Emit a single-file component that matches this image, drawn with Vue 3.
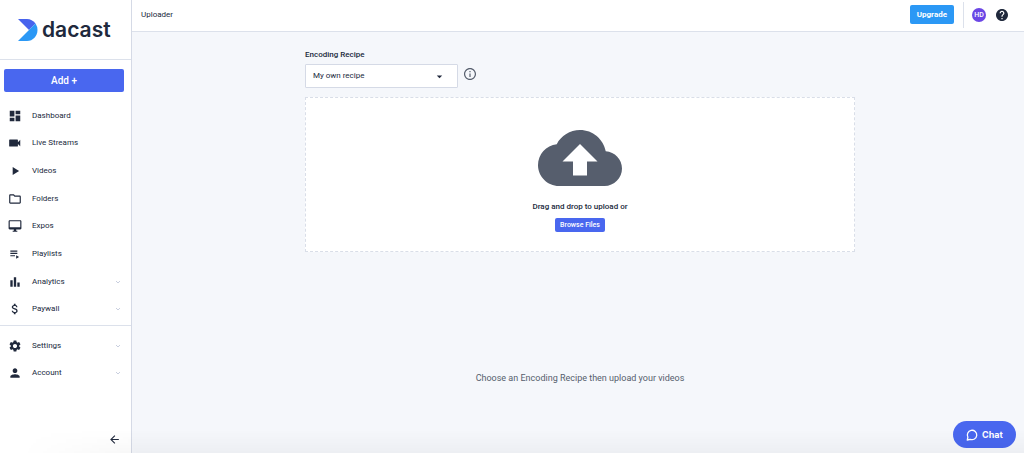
<script setup>
import { ref } from 'vue'

const mainLinks = [
  { label: 'Dashboard', icon: 'M3 13h8V3H3v10zm0 8h8v-6H3v6zm10 0h8V11h-8v10zm0-18v6h8V3h-8z' },
  { label: 'Live Streams', icon: 'M17 10.5V7c0-.55-.45-1-1-1H3c-.55 0-1 .45-1 1v10c0 .55.45 1 1 1h13c.55 0 1-.45 1-1v-3.5l4 4v-11l-4 4z' },
  { label: 'Videos', icon: 'M8 5v14l11-7z' },
  { label: 'Folders', icon: 'M9.17 6l2 2H20v10H4V6h5.17M10 4H4c-1.1 0-1.99.9-1.99 2L2 18c0 1.1.9 2 2 2h16c1.1 0 2-.9 2-2V8c0-1.1-.9-2-2-2h-8l-2-2z' },
  { label: 'Expos', icon: 'M21 2H3c-1.1 0-2 .9-2 2v12c0 1.1.9 2 2 2h7v2H8v2h8v-2h-2v-2h7c1.1 0 2-.9 2-2V4c0-1.1-.9-2-2-2zm0 12H3V4h18v10z' },
  { label: 'Playlists', icon: 'M4 10h12v2H4zM4 6h12v2H4zM4 14h8v2H4zM14 14v6l5-3z' },
  { label: 'Analytics', icon: 'M4 9h4v11H4zM16 13h4v7h-4zM10 4h4v16h-4z', expands: true },
  { label: 'Paywall', icon: 'M11.8 10.9c-2.27-.59-3-1.2-3-2.15 0-1.09 1.01-1.85 2.7-1.85 1.78 0 2.44.85 2.5 2.1h2.21c-.07-1.72-1.12-3.3-3.21-3.81V3h-3v2.16c-1.94.42-3.5 1.68-3.5 3.61 0 2.31 1.91 3.46 4.7 4.13 2.5.6 3 1.48 3 2.41 0 .69-.49 1.79-2.7 1.79-2.06 0-2.87-.92-2.98-2.1h-2.2c.12 2.19 1.76 3.42 3.68 3.83V21h3v-2.15c1.95-.37 3.5-1.5 3.5-3.55 0-2.84-2.43-3.81-4.7-4.4z', expands: true },
]

const accountLinks = [
  { label: 'Settings', icon: 'M19.14 12.94c.04-.3.06-.61.06-.94s-.02-.64-.07-.94l2.03-1.58c.18-.14.23-.41.12-.61l-1.92-3.32c-.12-.22-.37-.29-.59-.22l-2.39.96c-.5-.38-1.03-.7-1.62-.94l-.36-2.54c-.04-.24-.24-.41-.48-.41h-3.84c-.24 0-.43.17-.47.41l-.36 2.54c-.59.24-1.13.57-1.62.94l-2.39-.96c-.22-.08-.47 0-.59.22L2.74 8.87c-.12.21-.08.47.12.61l2.03 1.58c-.05.3-.09.63-.09.94s.02.64.07.94l-2.03 1.58c-.18.14-.23.41-.12.61l1.92 3.32c.12.22.37.29.59.22l2.39-.96c.5.38 1.03.7 1.62.94l.36 2.54c.05.24.24.41.48.41h3.84c.24 0 .44-.17.47-.41l.36-2.54c.59-.24 1.13-.56 1.62-.94l2.39.96c.22.08.47 0 .59-.22l1.92-3.32c.12-.22.07-.47-.12-.61l-2.01-1.58zM12 15.6c-1.98 0-3.6-1.62-3.6-3.6s1.62-3.6 3.6-3.6 3.6 1.62 3.6 3.6-1.62 3.6-3.6 3.6z', expands: true },
  { label: 'Account', icon: 'M12 12c2.21 0 4-1.79 4-4s-1.79-4-4-4-4 1.79-4 4 1.79 4 4 4zm0 2c-2.67 0-8 1.34-8 4v2h16v-2c0-2.66-5.33-4-8-4z', expands: true },
]

const groups = [
  { name: 'Library', key: 'library', links: mainLinks },
  { name: 'Account', key: 'account', links: accountLinks },
]

const recipe = ref('My own recipe')
</script>

<template>
  <div class="app">
    <aside class="sidebar">
      <a class="logo" href="#" aria-label="dacast">
        <svg class="logo-mark" viewBox="0 0 20 22" aria-hidden="true">
          <path d="M0 0H9Q14 0 17.500 4.500L11 11Z" fill="#4763ed" />
          <path d="M17.500 4.500Q19.500 7.500 19.500 11C19.500 17 15 22 9 22H0Z" fill="#2b98f5" />
        </svg>
        <span>dacast</span>
      </a>
      <button class="add" type="button">Add +</button>
      <nav v-for="group in groups" :key="group.key" class="group" :class="group.key" :aria-label="group.name">
        <a v-for="link in group.links" :key="link.label" class="link" href="#">
          <svg class="link-icon" viewBox="0 0 24 24" aria-hidden="true"><path :d="link.icon" /></svg>
          <span>{{ link.label }}</span>
          <svg v-if="link.expands" class="chevron" viewBox="0 0 8 8" aria-hidden="true"><path d="M2 3l2 2 2-2" /></svg>
        </a>
      </nav>
      <button class="collapse" type="button" aria-label="Collapse menu">
        <svg viewBox="0 0 24 24" aria-hidden="true"><path d="M20 11H7.830l5.590-5.590L12 4l-8 8 8 8 1.410-1.410L7.830 13H20v-2z" /></svg>
      </button>
    </aside>

    <div class="page">
      <header class="topbar">
        <h1>Uploader</h1>
        <button class="upgrade" type="button">Upgrade</button>
        <div class="user">
          <button class="avatar" type="button">HD</button>
          <a class="help" href="#" aria-label="Help">
            <svg viewBox="2 2 20 20" aria-hidden="true"><path d="M12 2C6.480 2 2 6.480 2 12s4.480 10 10 10 10-4.480 10-10S17.520 2 12 2zm1 17h-2v-2h2v2zm2.070-7.750l-.9.92C13.450 12.900 13 13.500 13 15h-2v-.5c0-1.100.45-2.100 1.170-2.830l1.240-1.260c.37-.36.59-.86.59-1.410 0-1.100-.9-2-2-2s-2 .9-2 2H8c0-2.210 1.790-4 4-4s4 1.790 4 4c0 .88-.36 1.680-.93 2.250z" /></svg>
          </a>
        </div>
      </header>

      <main class="content">
        <div class="uploader">
          <label class="recipe-label" for="recipe">Encoding Recipe</label>
          <div class="recipe-row">
            <div class="select">
              <select id="recipe" v-model="recipe">
                <option>My own recipe</option>
              </select>
              <svg viewBox="0 0 24 24" aria-hidden="true"><path d="M7 10l5 5 5-5z" /></svg>
            </div>
            <button class="info" type="button" aria-label="About encoding recipes">
              <svg viewBox="2 2 20 20" aria-hidden="true"><path d="M11 7h2v2h-2zM11 11h2v6h-2zM12 2C6.480 2 2 6.480 2 12s4.480 10 10 10 10-4.480 10-10S17.520 2 12 2zm0 18c-4.410 0-8-3.590-8-8s3.590-8 8-8 8 3.590 8 8-3.590 8-8 8z" /></svg>
            </button>
          </div>
          <section class="dropzone">
            <svg class="cloud" viewBox="0 4 24 16" aria-hidden="true"><path d="M19.350 10.040C18.670 6.590 15.640 4 12 4 9.110 4 6.600 5.640 5.350 8.040 2.340 8.360 0 10.910 0 14c0 3.310 2.690 6 6 6h13c2.760 0 5-2.240 5-5 0-2.640-2.050-4.780-4.650-4.960zM14 13v4h-4v-4H7l5-5 5 5h-3z" /></svg>
            <p>Drag and drop to upload or</p>
            <button class="browse" type="button">Browse Files</button>
          </section>
        </div>
        <p class="hint">Choose an Encoding Recipe then upload your videos</p>
      </main>
    </div>

    <button class="chat" type="button">
      <svg viewBox="0 0 12 12" aria-hidden="true"><path d="M1.300 11l.6-2.800A4.700 4.700 0 1 1 4.200 10.300Z" /></svg>
      <span>Chat</span>
    </button>
  </div>
</template>

<style>
body {
  margin: 0;
}
</style>

<style scoped>
.app {
  display: flex;
  min-height: 100vh;
  background: #f5f7fb;
  color: #20293c;
  font: 8px/12px Roboto, "Liberation Sans", sans-serif;
}
/* Soft shade along the bottom edge of the window */
.app::after {
  position: fixed;
  right: 0;
  bottom: 0;
  left: 0;
  height: 24px;
  background: linear-gradient(transparent, rgb(0 0 0 / 3%));
  mask-image: linear-gradient(90deg, transparent 2%, #000 14%);
  content: "";
  pointer-events: none;
}
* {
  box-sizing: border-box;
}
button {
  padding: 0;
  border: 0;
  background: none;
  color: inherit;
  font: inherit;
  cursor: pointer;
}
a {
  color: inherit;
  text-decoration: none;
}
svg {
  display: block;
  fill: currentColor;
}
h1,
p {
  margin: 0;
}
.sidebar {
  display: flex;
  flex: none;
  flex-direction: column;
  width: 132px;
  border-right: 1px solid #d5dae6;
  background: #fff;
}
.logo {
  display: flex;
  align-items: center;
  gap: 4px;
  height: 60px;
  padding-left: 18px;
  border-bottom: 1px solid #dce1eb;
  font: 600 21px/28px Inter, Roboto, sans-serif;
}
.logo-mark {
  width: 20px;
  height: 22px;
}
.add {
  height: 23px;
  margin: 9px 7px 0 4px;
  border-radius: 2px;
  background: #4967ef;
  color: #fff;
  font-size: 10px;
  font-weight: 500;
}
.group {
  display: grid;
  grid-auto-rows: 1fr;
}
.library {
  min-height: 221px;
  margin-top: 10px;
}
.account {
  min-height: 62px;
  margin-top: 2px;
  padding-top: 6px;
  border-top: 1px solid #dce1eb;
}
.link {
  display: flex;
  align-items: center;
  gap: 10px;
  padding: 0 9px 0 8px;
}
.link-icon {
  width: 14px;
  height: 14px;
}
.chevron {
  width: 8px;
  height: 8px;
  margin-left: auto;
  fill: none;
  stroke: #c9cfdf;
}
.collapse {
  align-self: flex-end;
  margin: auto 10px 7px 0;
}
.collapse svg {
  width: 13px;
  height: 13px;
}
.page {
  display: flex;
  flex: 1;
  flex-direction: column;
  min-width: 0;
}
.topbar {
  display: flex;
  align-items: center;
  height: 32px;
  padding: 0 16px 2px 9px;
  border-bottom: 1px solid #dce1eb;
  background: #fff;
}
h1 {
  font-size: 8px;
  font-weight: 400;
}
.upgrade {
  height: 19px;
  margin-left: auto;
  padding: 0 7px;
  border-radius: 2px;
  background: #2b98f5;
  color: #fff;
  font-weight: 700;
}
.user {
  display: flex;
  align-items: center;
  gap: 10px;
  height: 26px;
  margin-left: 9px;
  padding-left: 8px;
  border-left: 1px solid #dce1eb;
}
.avatar {
  width: 14px;
  height: 14px;
  border-radius: 50%;
  background: #6b46e5;
  color: #fff;
  font-size: 7px;
  font-weight: 500;
}
.help svg,
.info svg {
  width: 12px;
  height: 12px;
}
.content {
  display: flex;
  flex: 1;
  flex-direction: column;
  align-items: center;
  padding: 17px 22px 17px 26px;
}
.uploader {
  width: 100%;
  max-width: 550px;
}
.recipe-label {
  display: block;
  font-weight: 500;
}
.recipe-row {
  display: flex;
  gap: 6px;
  margin-top: 3px;
}
.select {
  display: grid;
  align-items: center;
  width: 153px;
}
.select select,
.select svg {
  grid-area: 1 / 1;
}
.select select {
  width: 100%;
  height: 24px;
  padding: 0 7px;
  border: 1px solid #d5dae6;
  border-radius: 1px;
  appearance: none;
  background: #fff;
  color: inherit;
  font: inherit;
}
.select svg {
  justify-self: end;
  width: 13px;
  height: 13px;
  margin-right: 12px;
  pointer-events: none;
}
.info {
  align-self: flex-start;
  margin-top: 4px;
  color: #565e6d;
}
.dropzone {
  display: flex;
  flex-direction: column;
  align-items: center;
  margin-top: 9px;
  padding: 32px 16px 19px;
  border: 1px dashed #d9dee8;
  background: #fff;
}
.cloud {
  width: 84px;
  height: 56px;
  color: #565e6d;
}
.dropzone p {
  margin-top: 15px;
  font-weight: 500;
}
.browse {
  height: 14px;
  margin-top: 5px;
  padding: 0 5px;
  border-radius: 2px;
  background: #4967ef;
  color: #fff;
  font-size: 7px;
  font-weight: 500;
}
.hint {
  margin-top: 120px;
  color: #565e6d;
  font-size: 9px;
}
.chat {
  position: fixed;
  right: 8px;
  bottom: 5px;
  display: flex;
  align-items: center;
  justify-content: center;
  gap: 4px;
  width: 63px;
  height: 27px;
  border-radius: 14px;
  background: #4967ef;
  color: #fff;
  font: 700 9px/12px Inter, Roboto, sans-serif;
}
.chat svg {
  width: 12px;
  height: 12px;
  fill: none;
  stroke: currentColor;
  stroke-width: 1.3;
  stroke-linejoin: round;
}
</style>
